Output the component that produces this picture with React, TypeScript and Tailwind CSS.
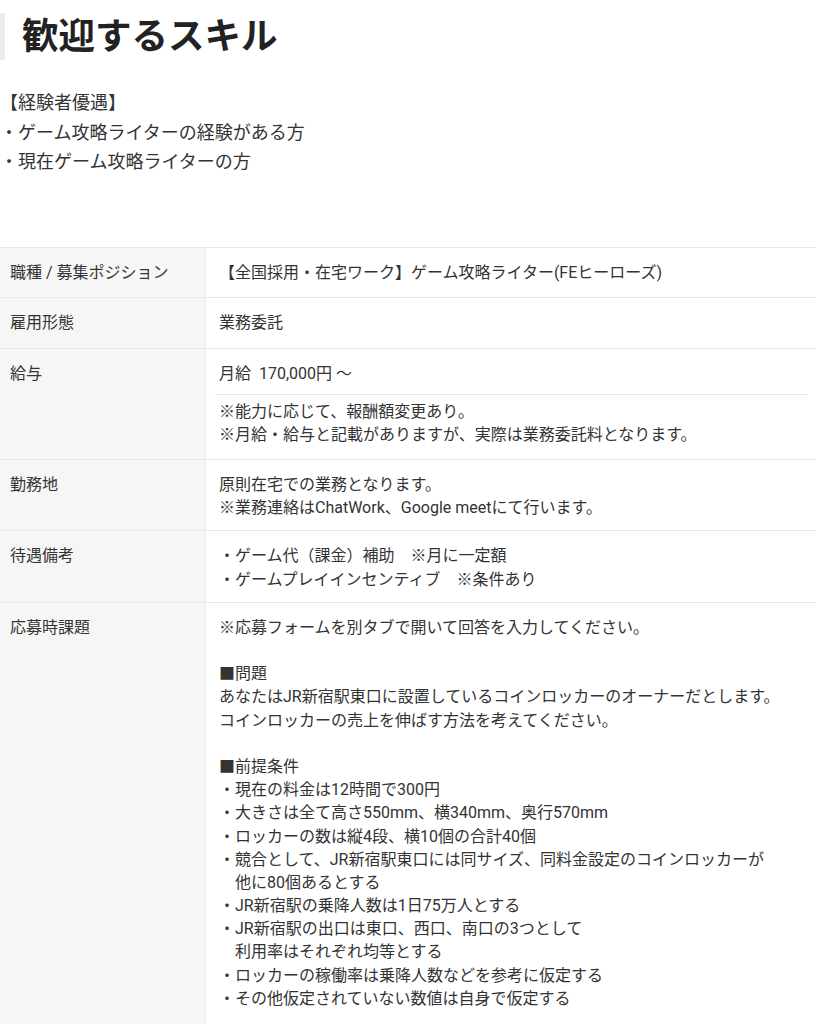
import React from "react";

const FONT = "font-[family-name:Roboto,'Noto_Sans_CJK_JP',sans-serif]";

function L({ children }: { children: React.ReactNode }) {
  return <p className="h-[23.2px] leading-[23.2px] whitespace-pre">{children}</p>;
}

function Row({
  label,
  children,
  single,
}: {
  label: string;
  children: React.ReactNode;
  single?: boolean;
}) {
  return (
    <div
      className={`grid grid-cols-[206px_1fr] border-b border-[#e9e9e9] ${
        single ? "h-[50.5px]" : ""
      }`}
    >
      <div className="bg-[#f6f6f6] border-r border-[#ebebeb] pl-[10px] pr-2 pt-[13px] pb-[11px]">
        <L>{label}</L>
      </div>
      <div className="pl-[13px] pr-[8px] pt-[13px] pb-[11px]">{children}</div>
    </div>
  );
}

export default function App() {
  const lines: string[] = [
    "※応募フォームを別タブで開いて回答を入力してください。",
    "",
    "■問題",
    "あなたはJR新宿駅東口に設置しているコインロッカーのオーナーだとします。",
    "コインロッカーの売上を伸ばす方法を考えてください。",
    "",
    "■前提条件",
    "・現在の料金は12時間で300円",
    "・大きさは全て高さ550mm、横340mm、奥行570mm",
    "・ロッカーの数は縦4段、横10個の合計40個",
    "・競合として、JR新宿駅東口には同サイズ、同料金設定のコインロッカーが",
    "　他に80個あるとする",
    "・JR新宿駅の乗降人数は1日75万人とする",
    "・JR新宿駅の出口は東口、西口、南口の3つとして",
    "　利用率はそれぞれ均等とする",
    "・ロッカーの稼働率は乗降人数などを参考に仮定する",
    "・その他仮定されていない数値は自身で仮定する",
    "",
    "",
  ];
  return (
    <div className={`${FONT} bg-white text-[#333] w-[816px] min-h-[1024px] overflow-hidden`}>
      <div className="pt-[13px]">
        <div className="border-l-[5px] border-[#ececec] pl-[17px] h-[47px] flex items-center">
          <h1 className="text-[36.5px] font-bold leading-[47px] text-[#222]">
            歓迎するスキル
          </h1>
        </div>
      </div>

      <div className="mt-[28px] text-[18px] leading-[29.5px]">
        <p className="h-[29.5px]">【経験者優遇】</p>
        <p className="h-[29.5px]">・ゲーム攻略ライターの経験がある方</p>
        <p className="h-[29.5px]">・現在ゲーム攻略ライターの方</p>
      </div>

      <div className="mt-[70px] border-t border-[#e9e9e9] text-[16px]">
        <Row label="職種 / 募集ポジション" single>
          <L>【全国採用・在宅ワーク】ゲーム攻略ライター(FEヒーローズ)</L>
        </Row>
        <Row label="雇用形態" single>
          <L>業務委託</L>
        </Row>
        <div className="grid grid-cols-[206px_1fr] border-b border-[#e9e9e9]">
          <div className="bg-[#f6f6f6] border-r border-[#ebebeb] pl-[10px] pr-2 pt-[13px] pb-[12px]">
            <L>給与</L>
          </div>
          <div className="pl-[13px] pr-[8px] pt-[13px] pb-[13px]">
            <div className="pb-[9px] border-b border-[#e6e6e6] -ml-[4px] pl-[4px]">
              <L>月給  170,000円 〜</L>
            </div>
            <div className="pt-[5px]">
              <L>※能力に応じて、報酬額変更あり。</L>
              <L>※月給・給与と記載がありますが、実際は業務委託料となります。</L>
            </div>
          </div>
        </div>
        <Row label="勤務地">
          <L>原則在宅での業務となります。</L>
          <L>※業務連絡はChatWork、Google meetにて行います。</L>
        </Row>
        <Row label="待遇備考">
          <L>・ゲーム代（課金）補助　※月に一定額</L>
          <L>・ゲームプレイインセンティブ　※条件あり</L>
        </Row>
        <Row label="応募時課題">
          {lines.map((l, i) => (
            <L key={i}>{l || "\u00a0"}</L>
          ))}
        </Row>
      </div>
    </div>
  );
}
